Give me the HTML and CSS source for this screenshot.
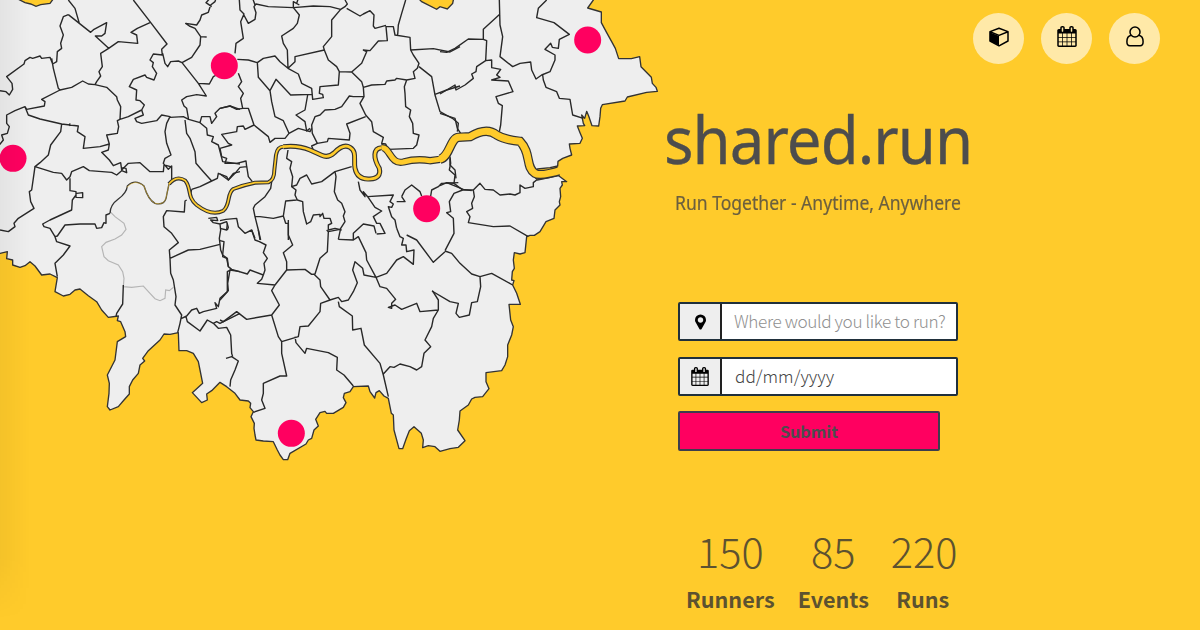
FILE: index.html
```html
<!DOCTYPE html>
<html lang="en">
<head>
<meta charset="utf-8">
<title>shared.run</title>
<link rel="stylesheet" href="styles.css">
</head>
<body>
<div class="page">
<svg class="map" viewBox="0 0 2100 1410" width="700" height="470" aria-hidden="true">
  <path class="land" d="M-20,-20L1780,-20 1780,0 1763,24 1804,36 1804,68 1820,98 1835,125 1846,145 1856,176 1894,176 1919,170 1923,200 1954,232 1957,250 1968,262 1972,274 1940,277 1882,291 1875,303 1807,314 1802,325 1800,350 1796,378 1776,377 1766,348 1760,334 1754,355 1745,345 1750,370 1754,377 1732,378 1740,398 1747,415 1740,430 1708,432 1710,445 1715,465 1688,475 1674,484 1673,498 1650,503 1612,507 1600,525 1612,540 1676,527 1700,545 1685,545 1687,555 1680,565 1682,590 1678,605 1680,615 1665,630 1662,655 1638,665 1620,695 1603,706 1590,706 1580,710 1575,758 1560,762 1543,758 1540,780 1543,805 1537,815 1535,840 1542,842 1538,855 1550,880 1561,913 1527,913 1532,960 1540,980 1535,1005 1523,1035 1523,1070 1515,1095 1505,1112 1458,1118 1458,1145 1467,1166 1448,1190 1425,1192 1415,1197 1405,1215 1380,1233 1378,1260 1373,1290 1395,1322 1375,1342 1350,1346 1320,1354 1305,1340 1285,1337 1268,1343 1270,1320 1264,1300 1242,1280 1228,1292 1218,1318 1208,1346 1197,1346 1182,1290 1180,1245 1174,1240 1165,1195 1152,1188 1138,1172 1128,1178 1124,1194 1110,1175 1105,1158 1060,1160 1050,1175 1033,1180 1030,1193 1038,1208 1030,1222 1000,1240 980,1240 975,1234 960,1238 947,1258 955,1278 942,1290 935,1315 925,1320 918,1332 870,1360 863,1379 850,1379 840,1365 832,1350 820,1325 790,1323 768,1320 765,1305 762,1285 763,1270 753,1250 760,1235 750,1223 752,1210 745,1203 720,1200 705,1180 680,1160 660,1147 635,1172 620,1182 622,1200 605,1208 577,1178 608,1150 600,1110 595,1085 580,1060 560,1052 537,1052 535,998 510,1003 492,1002 480,1020 445,1052 428,1075 434,1083 420,1095 415,1120 398,1140 388,1160 388,1182 372,1200 355,1220 330,1230 322,1220 327,1180 328,1150 322,1125 345,1080 352,1025 377,1010 375,995 362,965 352,962 355,948 325,952 305,930 290,905 265,887 240,867 225,870 210,883 190,888 165,875 172,833 150,822 125,825 105,798 90,785 75,797 60,802 38,795 38,780 20,776 22,755 0,760 -20,760Z"/>
  <g class="gap">
    <path d="M40,-10L75,8 92,12 108,19 122,14 150,10 165,-10M1250,-10L1265,5 1310,28 1320,20 1342,27 1358,10 1362,-10"/>
  </g>
  <path class="faint" d="M330,635L345,650 372,670 378,688 365,705 345,717 318,727 305,740 312,770 325,782 355,795 368,815 372,835 370,860 395,862 430,858 450,880 465,896 480,902 495,895 497,870 508,872 520,862"/>

  <!-- north-west -->
  <g class="ward">
    <path d="M205,0L225,25 238,70M205,44L190,50 180,78 190,105 182,130 185,145 172,155 170,185 158,192 150,172 125,175 120,168 98,175 90,172 75,182 72,192 20,230 36,250 38,268 28,285 18,275 0,272M205,44L272,97 282,88 320,68 315,100 305,108 286,108 326,145 302,160 307,200 297,215 302,228 290,245 285,254M155,175L160,205 175,265 180,270 215,262 248,243 265,252 285,254 320,262 350,290 352,300 362,320 360,358M326,145L355,125 413,130 410,105 393,97 412,85 450,68M400,0L450,65 501,132 485,148 487,165 460,162 450,180 460,188 457,200 470,220 462,240 440,232 435,225 400,238 388,260 410,270 408,300 420,302 433,315 425,330 385,350 360,358M488,160L495,190 503,200 512,185 535,183 546,188 575,172 600,135 602,110M602,110L620,111M602,110L585,85 568,78 557,70 590,75 600,60 605,45 625,37 632,15 645,5 648,-5M630,-5L618,8 635,20M546,188L595,250 619,288 590,284 560,290 545,300 552,318 560,325 566,360M595,250L628,252 640,230 655,222"/>
    <path d="M180,270L125,298 135,305 133,318 80,328 75,320 45,332 20,345 20,370 28,380 22,400 5,405 10,420 -2,435M75,320L85,345 120,357 185,372 235,378 232,395 255,410 250,445 300,440 328,432 320,405 352,400 356,380 352,362 360,358M210,370L208,378M185,372L182,395 152,435 145,465 120,488 105,500 160,517 185,520 200,540 210,530 215,515 250,500 268,512 335,517 350,525 365,512 380,518 378,505 365,503M328,432L325,450 305,457 328,480 340,497 362,488 365,510 385,490 420,488 450,515 490,515 492,495 512,500M425,330L430,345 405,355 410,365 425,370 470,362 485,345 510,350 500,370 495,395 500,430 513,465 495,475 490,490 505,508 515,498 515,540M510,352L550,350 566,358 600,368 605,350 630,350 635,370 650,350 645,340 660,325 690,318 720,328M555,360L560,400 570,415 585,455 588,490 610,515 635,543 600,560 575,568M600,368L620,385 622,405 640,410 635,425 655,435 668,485 720,492M635,543L652,535 655,520 680,530 685,540 700,520 720,515"/>
    <path d="M105,500L95,570 88,575 92,605 102,625 55,655 42,670 45,680 25,695 0,690M210,535L210,572 228,575 228,592 248,593 248,578 230,580M228,585L217,600 215,630 150,660 128,672 132,680 150,685 165,710 172,708 195,675 240,672 285,672 290,685 305,683 312,668 318,670 318,645 330,640M165,710L170,725 210,738 190,765 165,790 172,830M575,568L570,590M560,600L555,603 553,636 500,632 490,650 492,680 515,700 535,728 508,750 510,775M510,775L565,750 600,748 660,733M625,655L650,652 653,662 632,660 640,668 660,672 662,690 658,715 662,750 668,765 668,770 680,775 685,800M660,672L680,665 685,682 682,690M510,775L512,820 520,840 528,890 525,915 545,945 540,970 533,998M545,955L560,948 575,930 590,925 598,940 610,935 650,925 645,908 655,920 660,895 685,872 683,850 690,810 720,815M558,950L562,965 600,993 622,960 640,970 650,965 660,970 690,955 720,940M640,970L655,985 680,982 692,1005 695,1060 698,1070M678,1075L695,1070 715,1083 705,1110 692,1140 690,1160M370,855L368,912 350,940 348,950"/>
  </g>
  <!-- north -->
  <g class="ward" transform="translate(660 0)">
    <path d="M58,0L60,30 72,42 62,65 70,115 48,130 45,160M70,42L85,70 105,58 108,38 102,20 108,12 145,20 220,23 280,18 330,20 362,28 375,20 382,12 375,0M105,15L98,-5M220,23L220,5 238,15M235,-5L230,10M220,23L238,45 232,70 220,85 185,108 190,130 202,150 204,205M52,178L85,180 112,188 130,175 165,168 180,185 204,205 235,222 245,250 275,265 278,298 310,293 308,283 298,280 300,260 355,255 358,215M112,188L115,232 150,272 155,305 165,350 190,362 207,400M150,272L168,238 212,285 278,283M204,205L225,185 225,170 313,150 310,140 335,110 335,60 362,28M313,150L325,180 350,200 358,215 395,216 425,190 440,155 430,150 450,152 475,123 502,122 498,80 520,80 525,105 570,112 572,150 580,165 597,190 592,205 580,215 585,235 560,240 530,235 525,240 500,243 495,253 455,255 430,262 425,245 395,216M380,25L420,48 430,42 450,32 462,45 460,78 465,85 498,76M557,0L545,40 535,75 533,105M572,150L640,146 690,156 720,140M597,200L635,230 645,285 660,335 700,357 715,370 712,395M645,283L680,270 720,258M430,262L432,290 420,310 437,345 455,365 460,395 490,412 485,430 497,432 505,448 580,445 590,435 597,405 580,400 578,370 568,350 572,330 557,320 555,280 553,260 560,240M432,290L400,290 388,288 365,320 345,328 315,330 300,345 285,350 275,375 277,400 292,430 322,425 325,415 388,420 390,400 380,372 437,350M263,285L255,330 228,345 255,365 260,393 270,385"/>
    <path d="M55,220L65,245 55,260 70,280 62,295 68,325 50,328 30,318 0,325M68,325L85,325 102,375 145,410 150,427 165,415 195,415 207,400 235,385 270,395 275,385M102,375L75,388 70,378 52,380 50,395 5,403 25,430 35,435 0,445 5,470 20,475 15,490 50,490 78,483 80,500 60,502 45,520 25,540 0,522M80,498L85,530 97,545M292,430L275,438 280,450M204,450L200,475 215,485 210,505 218,530 215,560 230,555 240,535 260,525 275,552 305,545 345,515 395,500M345,515L348,530 343,575 353,600 365,610 375,635 370,648 375,665 362,685 355,718M155,545L152,565 135,590 105,615 100,625 105,650 120,650 160,655 190,648 197,603 230,600M105,650L115,690 122,720M190,648L197,670 205,670 205,720M215,560L228,570 225,585 232,600 248,605 250,635 260,672 272,665 280,645 300,643 300,650 308,640 312,655 330,655 335,670 325,675 325,690 345,685 365,690M415,545L420,570 435,590 430,575 443,590 465,622 485,633 460,650 470,670 480,670 495,700 470,702M443,590L520,585 510,605 520,612 515,622 505,620 515,650 525,660 530,685M545,590L555,570 575,555 600,575 605,588M545,590L555,605 530,605M632,588L635,570 655,560 665,550 715,548M690,475L690,495 705,510 708,535M0,662L18,658 50,655 55,680 75,700 95,690 105,715"/>
  </g>
  <!-- north-east -->
  <g class="ward" transform="translate(1320 0)">
    <path d="M178,0L180,75 188,110 180,170 218,200 240,190 272,186 275,210 288,237 305,225 330,215 345,180 345,165 315,148 332,130 337,142 355,145 358,118 388,103 342,68 290,53 295,25 320,0M180,42L130,88 130,118 140,122 137,182 110,200 108,215 95,222 100,235 75,255 48,270 45,255 20,270 0,282M0,155L20,157 45,145 85,117 130,118M137,182L155,180 155,203 182,208 170,225 180,232 155,240 205,243 219,275 168,290 175,310 187,317 182,375 178,395M308,225L310,240 318,262 350,275 358,295 390,298 398,345 430,355M0,340L45,355 52,385 62,400M30,470L32,490 28,510 45,525 42,550 20,548 0,557M42,550L68,570 100,570 120,550 135,568 160,570 180,585 210,582 225,585 240,578 240,555 255,565 280,560 280,548 290,540M68,570L42,580 28,605 32,635 20,638 40,655 42,700 15,752M100,570L103,590 95,610 98,625 80,635 90,650 85,668 160,680 210,678 265,710"/>
  </g>
  <!-- south -->
  <g class="ward" transform="translate(660 660)">
    <path d="M95,30L105,60 118,65 138,75 130,98 142,115 132,130 135,150 130,165 90,150 82,162 35,148 22,155 22,215 0,240M0,25L20,30 22,10M0,62L12,65 8,105 22,115 25,140 35,148M115,30L120,60M205,0L205,45 218,75 190,98 200,125 200,150 255,148 275,163 285,162 300,115 322,95 325,35 320,30M325,35L360,28M355,58L400,60 400,40 430,12 462,18 468,40M400,60L415,50 438,98 440,120 468,172 432,165 428,145 405,125 398,150 412,188 400,215 385,240 365,245 355,232 330,240 302,200 300,180 282,163M130,165L125,178 112,190 165,195 200,150M165,195L155,212 178,255 155,285 80,298 50,275 10,305 0,300M155,285L175,350 185,365 235,350 240,320 265,318 300,275 302,250 330,240M185,365L185,400 200,468 180,468 130,490 130,520 125,540 135,565 100,577M225,350L228,368 255,400 260,385 325,398 352,412 350,450 372,465 400,498M355,245L358,260 397,288 398,330 423,325 433,375 480,430 490,465 505,530M490,462L510,440 522,442 540,432 570,440 590,450 605,440 612,400 632,380 615,360 635,320 640,295 655,270 655,240 637,212M655,270L600,275 590,250 545,268 525,255 505,262 515,265 515,250 527,238 500,205 480,200 468,172 500,160 530,120 550,110 580,133 582,90 560,95 558,75 545,75 550,55 540,50 530,25M560,45L590,60 640,127 675,95"/>
  </g>
  <!-- south-east -->
  <g class="ward" transform="translate(1200 540)">
    <path d="M140,8L190,28 215,32M135,213L155,220 180,250 215,282 240,290 275,280 338,315M240,290L242,320 232,365 215,368 208,405 178,412 168,400 175,370 150,365 96,333"/>
  </g>

  <g class="bank">
    <path stroke-width="4" d="M330,640Q330,615 355,597T382,558Q405,535 432,558Q445,600 465,610Q497,618 500,585L507,552"/>
    <path stroke-width="12" d="M507,552Q530,525 556,542C575,565 560,590 590,615Q635,650 670,632C692,615 680,580 700,567Q730,555 765,548L805,547Q823,540 823,510L828,465Q832,440 850,440"/>
    <path stroke-width="15" d="M850,440Q895,435 930,450L965,466Q985,475 1003,458Q1030,430 1050,442C1072,455 1060,480 1065,505Q1072,540 1110,537Q1145,535 1138,505C1120,475 1118,445 1145,443"/>
    <path stroke-width="22" d="M1145,443C1170,440 1170,495 1210,486Q1250,475 1290,482L1320,478"/>
    <path stroke-width="28" d="M1320,478C1350,470 1350,415 1375,412L1410,410Q1460,380 1490,405Q1515,420 1560,424C1595,460 1575,500 1605,520Q1620,530 1676,513"/>
  </g>
  <g class="water">
    <path stroke-width="1.5" d="M380,562Q405,535 432,558Q445,600 465,610Q497,618 500,585L507,552"/>
    <path stroke-width="5" d="M507,552Q530,525 556,542C575,565 560,590 590,615Q635,650 670,632C692,615 680,580 700,567Q730,555 765,548L805,547Q823,540 823,510L828,465Q832,440 850,440"/>
    <path stroke-width="8" d="M848,440Q895,435 930,450L965,466Q985,475 1003,458Q1030,430 1050,442C1072,455 1060,480 1065,505Q1072,540 1110,537Q1145,535 1138,505C1120,475 1118,445 1145,443"/>
    <path stroke-width="15" d="M1145,443C1170,440 1170,495 1210,486Q1250,475 1290,482L1320,478"/>
    <path stroke-width="21" d="M1318,478C1350,470 1350,415 1375,412L1410,410Q1460,380 1490,405Q1515,420 1560,424C1595,460 1575,500 1605,520Q1620,530 1686,510"/>
  </g>
  <g class="pin">
    <circle cx="673" cy="197" r="40.5"/>
    <circle cx="1763" cy="120" r="40.5"/>
    <circle cx="39" cy="475" r="40.5"/>
    <circle cx="1280" cy="626" r="40.5"/>
    <circle cx="874" cy="1300" r="40.5"/>
  </g>
</svg>
<div class="edge"></div>

<svg class="defs" width="0" height="0">
  <symbol id="calendar" viewBox="64 0 1664 1792"><path d="M192 1664h288v-288h-288v288zm352 0h320v-288h-320v288zm-352-352h288v-320h-288v320zm352 0h320v-320h-320v320zm-352-384h288v-288h-288v288zm736 736h320v-288h-320v288zm-384-736h320v-288h-320v288zm768 736h288v-288h-288v288zm-384-352h320v-320h-320v320zm-352-864v-288q0-13-9.5-22.5t-22.5-9.5h-64q-13 0-22.5 9.5t-9.5 22.5v288q0 13 9.5 22.5t22.5 9.5h64q13 0 22.5-9.5t9.5-22.5zm736 864h288v-320h-288v320zm-384-384h320v-288h-320v288zm384 0h288v-288h-288v288zm32-480v-288q0-13-9.5-22.5t-22.5-9.5h-64q-13 0-22.5 9.5t-9.5 22.5v288q0 13 9.5 22.5t22.5 9.5h64q13 0 22.5-9.5t9.5-22.5zm384-64v1280q0 52-38 90t-90 38h-1408q-52 0-90-38t-38-90v-1280q0-52 38-90t90-38h128v-96q0-66 47-113t113-47h64q66 0 113 47t47 113v96h384v-96q0-66 47-113t113-47h64q66 0 113 47t47 113v96h128q52 0 90 38t38 90z"/></symbol>
</svg>

<div class="content">
  <nav class="nav">
    <a class="round"><svg width="20" height="20" viewBox="0 0 20 20"><path d="M.8 5.2 10 9v9.6L.8 14z"/><path class="stroke" d="M10 1.2 19 4.6V14L10 18.8 1 14V4.6zM1 4.8 10 8.4 19 4.8"/></svg></a>
    <a class="round"><svg width="20" height="21"><use href="#calendar"/></svg></a>
    <a class="round"><svg width="18" height="21" viewBox="0 0 18 21"><circle class="stroke" cx="9" cy="6" r="5"/><path class="stroke" d="M5 9.3C2.2 10 .9 12.5.9 15.7c0 2.6 1 4 3 4h10.200c2 0 3-1.400 3-4 0-3.200-1.300-5.700-4.100-6.400"/></svg></a>
  </nav>
  <main class="main">
    <h1 class="title">shared.run</h1>
    <p class="tagline">Run Together - Anytime, Anywhere</p>
    <form class="form">
      <div class="field"><span class="addon"><svg width="11" height="16" viewBox="0 128 1024 1408"><path d="M768 640q0-106-75-181t-181-75-181 75-75 181 75 181 181 75 181-75 75-181zm256 0q0 109-33 179l-364 650q-16 33-47.500 52t-67.500 19-67.500-19-46.500-52l-365-650q-33-70-33-179 0-212 150-362t362-150 362 150 150 362z"/></svg></span><span class="value hint">Where would you like to run?</span></div>
      <div class="field"><span class="addon"><svg width="18" height="19"><use href="#calendar"/></svg></span><span class="value">dd/mm/yyyy</span></div>
      <button class="submit" type="button">Submit</button>
    </form>
    <div class="stats">
      <div class="stat"><span class="num">150</span><span class="label">Runners</span></div>
      <div class="stat"><span class="num">85</span><span class="label">Events</span></div>
      <div class="stat"><span class="num">220</span><span class="label">Runs</span></div>
    </div>
  </main>
</div>
</div>
</body>
</html>
```
FILE: styles.css
```css
* { box-sizing: border-box; }
body { margin: 0; background: #ffcb2b; font-family: "Noto Sans CJK SC", "Noto Sans", sans-serif; }
.page { position: relative; width: 1200px; height: 630px; overflow: hidden; }
.map { position: absolute; left: 0; top: 0; }
.land { fill: #eee; stroke: #333; stroke-width: 4; stroke-linejoin: round; }
.gap { fill: #ffcb2b; stroke: #333; stroke-width: 4; }
.ward { fill: none; stroke: #282828; stroke-width: 4.2; stroke-linejoin: round; }
.faint { fill: none; stroke: #b5b5b5; stroke-width: 3.5; }
.bank { fill: none; stroke: #333; }
.water { fill: none; stroke: #ffcb2b; }
.pin { fill: #ff0060; }
.edge { position: absolute; left: 0; top: -20px; width: 30px; height: 640px; background: linear-gradient(90deg, rgba(0,0,0,.045), rgba(0,0,0,0)); -webkit-mask-image: linear-gradient(#000 90%, transparent); mask-image: linear-gradient(#000 90%, transparent); }
.defs { position: absolute; }
.content { position: relative; padding: 13px 40px 0 665px; }
.nav { display: flex; justify-content: flex-end; gap: 17px; height: 51px; }
.nav .round:last-child { margin-left: .5px; }
.nav .round:not(:last-child) svg { margin-left: 2px; }
.round { width: 51px; height: 51px; border-radius: 50%; background: #ffe9a8; display: flex; align-items: center; justify-content: center; padding-bottom: 4px; }
.stroke { fill: none; stroke: #000; stroke-width: 1.5; stroke-linejoin: round; }
.main { width: 306px; }
.title { margin: 30px 0 0 -1px; font: 400 65.500px/90px "Noto Sans", sans-serif; letter-spacing: -1px; color: #4d4d4d; white-space: nowrap; transform: scaleX(.942); transform-origin: left; -webkit-text-stroke: .3px #4d4d4d; }
.tagline { margin: 6px 0 0 10px; font: 400 19.500px/26px "Noto Sans", sans-serif; color: #6b5f3f; white-space: nowrap; transform: scaleX(.9); transform-origin: left; -webkit-text-stroke: .2px #6b5f3f; }
.form { display: flex; flex-direction: column; gap: 16px; margin: 86px 0 0 13px; width: 280px; }
.field { display: flex; height: 39px; border: 2px solid #20303c; border-radius: 2px; background: #fff; }
.addon { flex: none; width: 42px; background: #eee; border-right: 2px solid #222; display: flex; align-items: center; justify-content: center; }
.value { padding-left: 13px; font-size: 17.200px; line-height: 34px; font-weight: 300; color: #444; white-space: nowrap; }
.hint { color: #909090; padding-left: 12px; letter-spacing: -.4px; }
.submit { width: 262px; height: 40px; margin-top: -1px; padding: 0; border: 2px solid #3d3d4d; border-radius: 2px; background: #ff0060; color: #4d4d4d; font: 700 16.200px/36px "Noto Sans CJK SC", sans-serif; }
.stats { display: flex; margin: 72px 0 0 21px; gap: 23px; color: #5d5230; }
.stat { display: flex; flex-direction: column; align-items: center; }
.num { font-size: 41.500px; line-height: 54px; font-weight: 200; }
.label { font-size: 21.600px; line-height: 44px; font-weight: 700; }
.stat:last-child { margin-left: -1px; }
.stat:last-child .label { margin-left: -3px; }
```
